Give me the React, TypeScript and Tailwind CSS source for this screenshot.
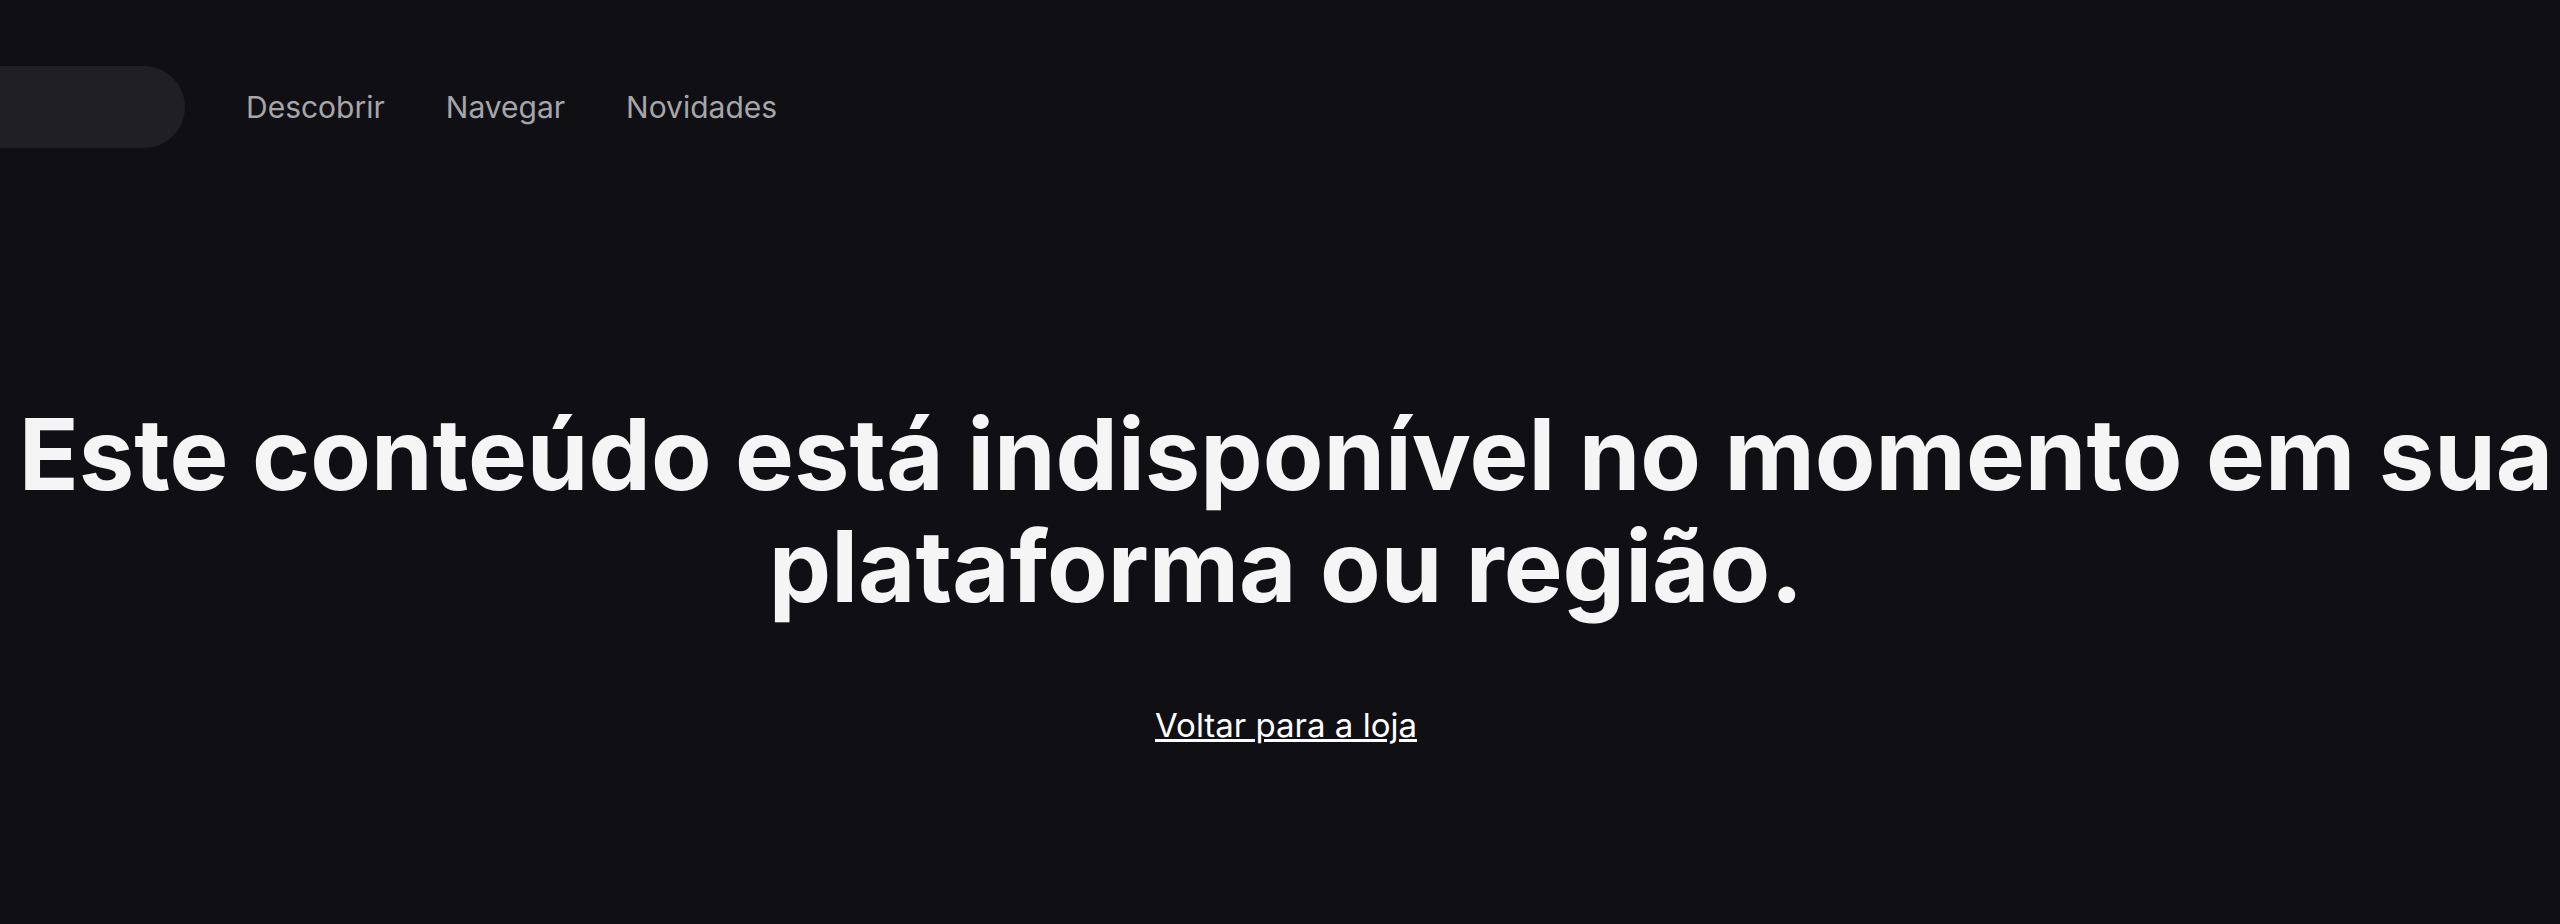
const links = ["Descobrir", "Navegar", "Novidades"];

export default function App() {
  return (
    <div className="min-h-screen overflow-hidden bg-[#101014] font-['Inter',sans-serif] text-[#f5f5f5]">
      {/* Store navigation */}
      <header className="flex items-center gap-[61px] pt-[66px]">
        <input
          type="search"
          aria-label="Buscar na loja"
          className="h-[82px] w-[185px] rounded-r-full bg-[#202024] px-8 text-3xl outline-none"
        />
        <nav className="flex items-center gap-[61px]">
          {links.map((label) => (
            <a key={label} href="#" className="text-[30px] leading-10 text-[#a6a6aa]">
              {label}
            </a>
          ))}
        </nav>
      </header>

      {/* Unavailable message */}
      <main className="flex flex-col items-center pt-[250px] pl-3 text-center">
        <h1 className="text-[99px] leading-[112px] font-bold whitespace-nowrap">
          Este conteúdo está indisponível no momento em sua
          <br />
          plataforma ou região.
        </h1>
        <a href="#" className="mt-20 text-[33px] leading-[46px] text-white underline">
          Voltar para a loja
        </a>
      </main>
    </div>
  );
}
